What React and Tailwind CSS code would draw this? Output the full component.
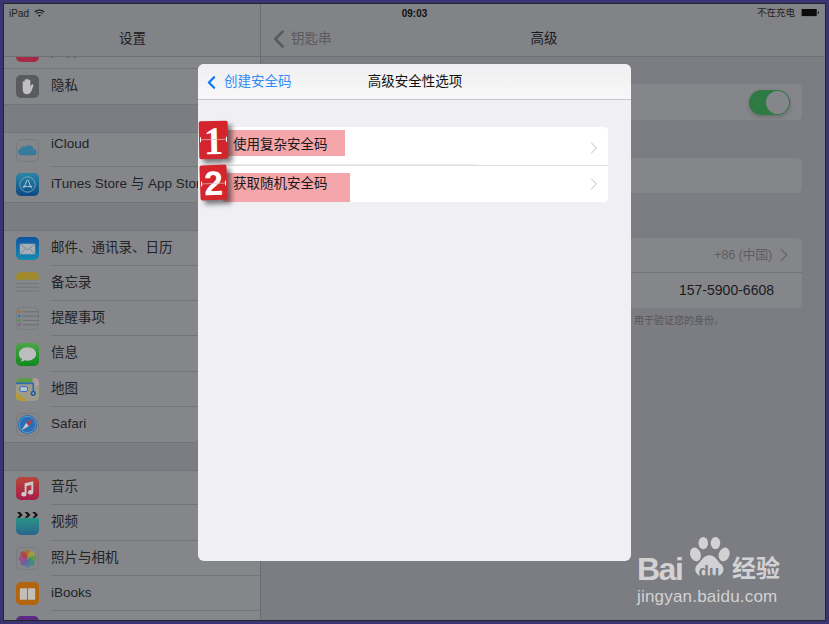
import React from 'react';
import { ChevronLeft, ChevronRight } from 'lucide-react';

const FONT = "font-['Liberation_Sans','Noto_Sans_CJK_SC',sans-serif]";

const IconHand = () => (
  <svg viewBox="0 0 24 24" className="w-full h-full">
    <rect width="24" height="24" rx="5" fill="#5a5b5f" />
    <path d="M7 12V7.500a1 1 0 0 1 2 0V5.500a1 1 0 0 1 2 0V5a1 1 0 0 1 2 0v1a1 1 0 0 1 2 0v6l1.500-2a1.100 1.100 0 0 1 1.700 1.300L16 17c-1 2-2.500 3-4.500 3-3 0-4.500-2-4.500-5z" fill="#c0c0c2" />
  </svg>
);
const IconCloud = () => (
  <svg viewBox="0 0 24 24" className="w-full h-full">
    <rect x=".5" y=".5" width="23" height="23" rx="5" fill="#85868a" stroke="#78797d" />
    <path d="M5 17a3.500 3.500 0 0 1-.5-6.800A4 4 0 0 1 10 8a5 5 0 0 1 8.500 2.500A3.300 3.300 0 0 1 19 17z" fill="#367a9c" />
  </svg>
);
const IconStore = () => (
  <svg viewBox="0 0 24 24" className="w-full h-full">
    <defs><linearGradient id="st" x1="0" y1="0" x2="0" y2="1"><stop offset="0" stopColor="#2a86a8" /><stop offset="1" stopColor="#0c4a85" /></linearGradient></defs>
    <rect width="24" height="24" rx="5" fill="url(#st)" />
    <circle cx="12" cy="12" r="8" fill="none" stroke="#8fb5c9" strokeWidth=".8" />
    <path d="M12.500 7l3.500 9M11.500 7.500L8 16M7 14h10" fill="none" stroke="#b0ccda" strokeWidth="1" />
  </svg>
);
const IconMail = () => (
  <svg viewBox="0 0 24 24" className="w-full h-full">
    <defs><linearGradient id="ma" x1="0" y1="0" x2="0" y2="1"><stop offset="0" stopColor="#0f55a0" /><stop offset="1" stopColor="#168bb0" /></linearGradient></defs>
    <rect width="24" height="24" rx="5" fill="url(#ma)" />
    <rect x="4" y="7" width="16" height="11" fill="#a5aeb6" />
    <path d="M4 7l8 6.500L20 7M4 18l6-6M20 18l-6-6" fill="none" stroke="#66798a" strokeWidth=".7" />
  </svg>
);
const IconNotes = () => (
  <svg viewBox="0 0 24 24" className="w-full h-full">
    <rect width="24" height="24" rx="5" fill="#85868a" />
    <path d="M0 7V5a5 5 0 0 1 5-5h14a5 5 0 0 1 5 5v3H0z" fill="#a08a2e" />
    <path d="M0 12h24M0 16h24M0 20h24" stroke="#6e6f73" strokeWidth=".7" />
  </svg>
);
const IconReminders = () => (
  <svg viewBox="0 0 24 24" className="w-full h-full">
    <rect x=".5" y=".5" width="23" height="23" rx="5" fill="#85868a" stroke="#7a7b7f" />
    <path d="M7 5h17M7 9.500h17M7 14h17M7 18.500h17" stroke="#5f6064" strokeWidth=".7" />
    <circle cx="3.500" cy="5" r="1.500" fill="#b46f20" />
    <circle cx="3.500" cy="9.500" r="1.500" fill="#2a80b0" />
    <circle cx="3.500" cy="14" r="1.500" fill="#4b9a3e" />
    <circle cx="3.500" cy="18.500" r="1.500" fill="#8a5aa5" />
  </svg>
);
const IconMessages = () => (
  <svg viewBox="0 0 24 24" className="w-full h-full">
    <defs><linearGradient id="me" x1="0" y1="0" x2="0" y2="1"><stop offset="0" stopColor="#4ca548" /><stop offset="1" stopColor="#0f8a1d" /></linearGradient></defs>
    <rect width="24" height="24" rx="5" fill="url(#me)" />
    <path d="M12 4.500c-5 0-9 3-9 7 0 2.300 1.300 4.200 3.300 5.400-.2 1-.8 2-1.800 2.600 2 0 3.500-.7 4.600-1.500.9.200 1.900.4 2.900.4 5 0 9-3 9-7s-4-6.900-9-6.900z" fill="#bcbdbf" />
  </svg>
);
const IconMaps = () => (
  <svg viewBox="0 0 24 24" className="w-full h-full">
    <clipPath id="mc"><rect width="24" height="24" rx="5" /></clipPath>
    <g clipPath="url(#mc)">
      <rect width="24" height="24" fill="#9d9c8c" />
      <rect width="17" height="5" fill="#5f9a45" />
      <rect x="19" width="5" height="8" fill="#b59aa0" />
      <path d="M0 15l12 9H0z" fill="#b49b2c" />
      <path d="M0 5.500h18V16" fill="none" stroke="#2b6cb5" strokeWidth="1.800" />
      <rect x="4" y="9" width="8" height="5" rx="1.500" fill="#b8c4d4" stroke="#2b6cb5" />
      <circle cx="18" cy="16" r="2" fill="#9d9c8c" stroke="#1c58a5" strokeWidth="1.500" />
    </g>
  </svg>
);
const IconSafari = () => (
  <svg viewBox="0 0 24 24" className="w-full h-full">
    <rect x=".5" y=".5" width="23" height="23" rx="5" fill="#85868a" stroke="#7a7b7f" />
    <circle cx="12" cy="12" r="10" fill="#2a6fb5" />
    <circle cx="12" cy="12" r="8.500" fill="none" stroke="#5c9bc8" />
    <path d="M18 6l-7.500 4.500 3 3z" fill="#c23a3a" />
    <path d="M6 18l7.500-4.500-3-3z" fill="#c5c6c8" />
  </svg>
);
const IconMusic = () => (
  <svg viewBox="0 0 24 24" className="w-full h-full">
    <defs><linearGradient id="mu" x1="0" y1="0" x2="0" y2="1"><stop offset="0" stopColor="#b8453b" /><stop offset="1" stopColor="#a81d4a" /></linearGradient></defs>
    <rect width="24" height="24" rx="5" fill="url(#mu)" />
    <path d="M9 6.500l9-2V16a2.800 2.300 0 1 1-2-2.200V8.300l-5 1.100V18a2.800 2.300 0 1 1-2-2.200z" fill="#cfcaca" />
  </svg>
);
const IconVideos = () => (
  <svg viewBox="0 0 24 24" className="w-full h-full">
    <defs><linearGradient id="vi" x1="0" y1="0" x2="0" y2="1"><stop offset="0" stopColor="#2a9585" /><stop offset="1" stopColor="#28658c" /></linearGradient></defs>
    <path d="M0 6h24v13a5 5 0 0 1-5 5H5a5 5 0 0 1-5-5z" fill="url(#vi)" />
    <rect y="0" width="24" height="6" fill="#85868a" />
    <path d="M1 0h3l3 3-3 3H1l3-3zM9 0h3l3 3-3 3H9l3-3zM17 0h3l3 3-3 3h-3l3-3z" fill="#111" />
  </svg>
);
const IconPhotos = () => {
  const petals = ['#b46f20', '#a5a03a', '#5a9a48', '#3c8a78', '#4a74a8', '#6a5a9e', '#9a4f8a', '#b0404a'];
  return (
    <svg viewBox="0 0 24 24" className="w-full h-full">
      <rect x=".5" y=".5" width="23" height="23" rx="5" fill="#85868a" stroke="#7a7b7f" />
      {petals.map((c, i) => (
        <ellipse key={i} cx="12" cy="6.800" rx="3" ry="4.300" fill={c} opacity=".85" transform={`rotate(${i * 45} 12 12)`} />
      ))}
    </svg>
  );
};
const IconBooks = () => (
  <svg viewBox="0 0 24 24" className="w-full h-full">
    <rect width="24" height="24" rx="5" fill="#b3640f" />
    <rect x="4" y="6.500" width="7.500" height="12" rx=".5" fill="#c2beb9" />
    <rect x="12.500" y="6.500" width="7.500" height="12" rx=".5" fill="#c2beb9" />
  </svg>
);

const Row = ({ icon, label, height, line = true, textClass = '' }) => (
  <div className={`flex shrink-0 bg-[#85868a] ${height}`}>
    <div className="w-[47px] pl-3 shrink-0 flex items-center">
      <div className="w-[23px] h-[23px] shrink-0">{icon}</div>
    </div>
    <div className={`flex-1 flex items-center text-[13.5px] text-[#222326] whitespace-nowrap overflow-hidden ${line ? 'border-b border-[#737478]' : ''} ${textClass}`}>
      {label}
    </div>
  </div>
);

const Gap = ({ height }) => <div className={`shrink-0 bg-[#7c7d82] border-y border-[#737478] ${height}`} />;

const Sidebar = () => (
  <div className="w-[257px] shrink-0 border-r border-[#6c6d71] flex flex-col overflow-hidden">
    <div className="h-[53px] shrink-0 bg-[#828387] border-b border-[#6f7074]">
      <div className="h-[18px] flex items-center gap-[5px] pl-[5px] text-[10px] text-[#222]">
        iPad
        <svg viewBox="0 0 16 12" className="w-[11px] h-[8px]" fill="none" stroke="#111" strokeWidth="1.600">
          <path d="M1 4.500c4-4 10-4 14 0M3.500 7c2.500-2.500 6.500-2.500 9 0" />
          <path d="M8 11.500l-2-2.200c1.200-1 2.800-1 4 0z" fill="#111" stroke="none" />
        </svg>
      </div>
      <div className="h-[34px] flex items-center justify-center text-[13.5px] text-[#1c1c1f] pl-[1px]">设置</div>
    </div>
    <div className="h-[12px] shrink-0 bg-[#85868a] flex border-b border-[#737478] overflow-hidden">
      <div className="ml-3 w-[23px] h-[5px] bg-[#a52a48] rounded-b-[5px] shrink-0" />
      <div className="ml-3 -mt-[14px] h-[18px] text-[13.5px] leading-[18px] text-[#222326]">声音</div>
    </div>
    <Row icon={<IconHand />} label="隐私" height="h-[35px]" line={false} />
    <Gap height="h-[29px]" />
    <Row icon={<IconCloud />} label="iCloud" height="h-[34px]" textClass="pb-[11px]" />
    <Row icon={<IconStore />} label="iTunes Store 与 App Store" height="h-[35px]" line={false} />
    <Gap height="h-[29px]" />
    <Row icon={<IconMail />} label="邮件、通讯录、日历" height="h-[35px]" />
    <Row icon={<IconNotes />} label="备忘录" height="h-[35px]" />
    <Row icon={<IconReminders />} label="提醒事项" height="h-[35px]" />
    <Row icon={<IconMessages />} label="信息" height="h-[36px]" />
    <Row icon={<IconMaps />} label="地图" height="h-[35px]" />
    <Row icon={<IconSafari />} label="Safari" height="h-[35px]" line={false} />
    <Gap height="h-[29px]" />
    <Row icon={<IconMusic />} label="音乐" height="h-[34px]" />
    <Row icon={<IconVideos />} label="视频" height="h-[36px]" />
    <Row icon={<IconPhotos />} label="照片与相机" height="h-[35px]" />
    <Row icon={<IconBooks />} label="iBooks" height="h-[35px]" />
    <div className="flex-1 bg-[#85868a] pl-3 pt-[5px]">
      <div className="w-[23px] h-[12px] bg-[#5c2a85] rounded-t-[5px]" />
    </div>
  </div>
);

const Detail = () => (
  <div className="flex-1 flex flex-col bg-[#7c7d82] min-w-0">
    <div className="h-[53px] shrink-0 bg-[#828387] border-b border-[#6f7074]">
      <div className="h-[18px] flex items-center justify-end gap-[6px] pr-[5px] text-[9.500px] text-[#222]">
        不在充电
        <svg viewBox="0 0 20 9" className="w-[19px] h-[8px]">
          <rect x="0" y="0" width="17" height="8" fill="#0c0c0c" />
          <rect x="18" y="2.500" width="1.500" height="3" fill="#333" />
        </svg>
      </div>
      <div className="h-[34px] relative flex items-center justify-center text-[13.5px]">
        <div className="absolute left-[3px] flex items-center text-[#5a5b5f]">
          <ChevronLeft size={30} strokeWidth={2} className="text-[#5a5b5f] -mr-[3px]" />
          钥匙串
        </div>
        <span className="text-[#1c1c1f] pl-[2px]">高级</span>
      </div>
    </div>

    <div className="pt-[27px] flex flex-col">
      <div className="h-[36px] bg-[#85868a] rounded-r-[5px] mr-[23px] flex items-center justify-end pr-[12px]">
        <div className="w-[41px] h-[25px] rounded-full bg-[#2e7a42] relative shadow-[0_2px_4px_rgba(0,0,0,0.2)]">
          <div className="absolute right-[1px] top-[1px] w-[23px] h-[23px] rounded-full bg-[#85868a]" />
        </div>
      </div>
      <div className="h-[38px]" />
      <div className="h-[35px] bg-[#85868a] rounded-r-[5px] mr-[23px]" />
      <div className="h-[45px]" />
      <div className="mr-[23px] rounded-r-[5px] bg-[#85868a]">
        <div className="h-[35px] border-b border-[#737478] flex items-center justify-end pr-[7px] text-[#5d5e62] text-[13px]">
          <span className="tracking-[-0.3px]">+86 (中国)</span>
          <ChevronRight size={22} strokeWidth={1.3} className="ml-[1px] text-[#66676b]" />
        </div>
        <div className="h-[35px] flex items-center justify-end pr-[28px] text-[14px] text-[#1b1b1e]">157-5900-6608</div>
      </div>
      <div className="text-[10px] text-[#55565a] pl-[373px] pt-[5px] whitespace-nowrap">用于验证您的身份。</div>
    </div>
  </div>
);

const Badge = ({ n, className, numClass }) => (
  <div className={`absolute bg-[#d4252c] rounded-[2px] shadow-[4px_4px_5px_rgba(0,0,0,0.5)] flex items-center justify-center ${className}`}>
    <span className={`text-white font-bold leading-none ${numClass}`}>{n}</span>
    <div className="absolute left-[1px] right-[1px] top-[18px] h-[1px] bg-[#d8c8c8] opacity-70" />
    <div className="absolute left-[1px] top-[16px] w-[1px] h-[5px] bg-white" />
    <div className="absolute right-[1px] top-[16px] w-[1px] h-[5px] bg-white" />
  </div>
);

const Modal = () => (
  <div className="absolute left-[194px] top-[60px] w-[433px] h-[497px] bg-[#efeff4] rounded-[6px] overflow-hidden">
    <div className="h-[36px] bg-gradient-to-b from-[#efeff1] to-[#f8f8f9] border-b border-[#c8c8cc] relative flex items-center pt-[1px]">
      <ChevronLeft size={21} strokeWidth={2.6} className="text-[#0a78fb] ml-[3px]" />
      <span className="text-[13.5px] text-[#2f8cf5] ml-[2px]">创建安全码</span>
      <span className="absolute inset-x-0 text-center text-[13.5px] text-[#111] pl-[1px]">高级安全性选项</span>
    </div>
    <div className="ml-[24px] mr-[23px] mt-[27px] bg-white rounded-[4px] overflow-hidden">
      <div className="h-[36px] relative border-b border-[#dddde0]">
        <div className="w-[123px] h-[26px] mt-[3px] bg-[#f4a6aa] flex items-center pl-[11px] pt-[4px] text-[13.5px] text-[#1a1a1a] whitespace-nowrap">使用复杂安全码</div>
        <div className="absolute left-0 bottom-0 w-[255px] h-[1px] bg-[#efeff1]" />
        <ChevronRight size={20} strokeWidth={1.2} className="absolute right-[4px] top-[8px] text-[#bcbcc0]" />
      </div>
      <div className="h-[36px] relative flex items-end">
        <div className="w-[128px] h-[29px] bg-[#f4a6aa] flex items-center pl-[11px] pb-[6px] text-[13.5px] text-[#1a1a1a] whitespace-nowrap">获取随机安全码</div>
        <ChevronRight size={20} strokeWidth={1.2} className="absolute right-[4px] top-[8px] text-[#bcbcc0]" />
      </div>
    </div>
    <Badge n="1" className="left-[1px] top-[57px] w-[29px] h-[38px] -rotate-1 font-['Liberation_Serif',serif]" numClass="text-[39px]" />
    <Badge n="2" className="left-[2px] top-[101px] w-[27px] h-[35px] rotate-[-2deg] font-['Liberation_Sans',sans-serif]" numClass="text-[34px]" />
  </div>
);

const BaiduMark = () => (
  <div className="absolute left-[633px] top-[533px] w-[150px] h-[72px] text-[#d2d2d4]">
    <div className="absolute left-0 top-[16px] text-[32px] font-bold leading-none font-['Liberation_Sans',sans-serif] tracking-[-1.5px]">Bai</div>
    <svg viewBox="0 0 48 54" className="absolute left-[49px] top-0 w-[45px] h-[47px]" fill="#d2d2d4">
      <ellipse cx="9" cy="20" rx="6" ry="8" transform="rotate(-20 9 20)" />
      <ellipse cx="18" cy="7" rx="5.500" ry="7" />
      <ellipse cx="32" cy="7" rx="5.500" ry="7" />
      <ellipse cx="42" cy="20" rx="6" ry="8" transform="rotate(20 42 20)" />
      <path d="M25 21c7 0 9 7 14 11 5 5 1 14-7 13-3 0-5-1-7-1s-4 1-7 1c-8 1-12-8-7-13 5-4 7-11 14-11z" />
    </svg>
    <div className="absolute left-[54px] top-[26px] w-[36px] text-center text-[17px] font-bold leading-none text-[#7c7d82] font-['Liberation_Sans',sans-serif]">du</div>
    <div className="absolute left-[95px] top-[20px] text-[24px] font-bold leading-none whitespace-nowrap">经验</div>
    <div className="absolute left-0 top-[51px] text-[17px] leading-none whitespace-nowrap tracking-[0.2px] font-['Liberation_Sans',sans-serif]">jingyan.baidu.com</div>
  </div>
);

export default function App() {
  return (
    <div className={`w-[829px] h-[624px] bg-[#3b3473] p-[3px] ${FONT}`}>
      <div className="w-full h-full border border-[#26262b] flex relative overflow-hidden">
        <Sidebar />
        <Detail />
        <div className="absolute inset-x-0 top-0 h-[18px] flex items-center justify-center text-[10px] font-bold text-[#111]">09:03</div>
        <Modal />
        <BaiduMark />
      </div>
    </div>
  );
}
